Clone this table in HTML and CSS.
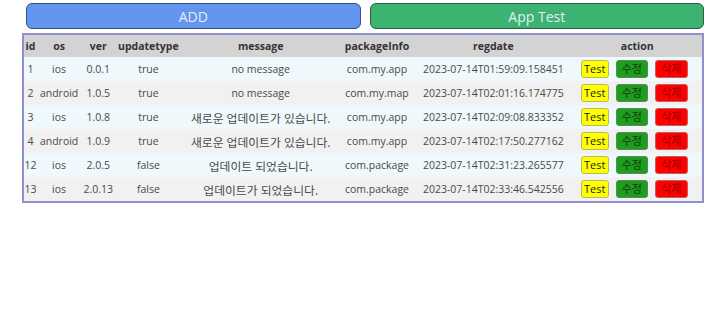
FILE: index.html
```html
<!DOCTYPE html>
<html lang="ko">
<head>
<meta charset="utf-8">
<link rel="stylesheet" href="styles.css">
</head>
<body>
<div class="wrap">
  <div class="topbar">
    <button class="big add">ADD</button>
    <button class="big apptest">App Test</button>
  </div>
  <table class="grid">
    <colgroup>
      <col class="c-id"><col class="c-os"><col class="c-ver"><col class="c-type"><col class="c-msg"><col class="c-pkg"><col class="c-date"><col class="c-act">
    </colgroup>
    <thead>
      <tr><th>id</th><th>os</th><th>ver</th><th>updatetype</th><th>message</th><th>packageInfo</th><th>regdate</th><th>action</th></tr>
    </thead>
    <tbody>
      <tr><td>1</td><td>ios</td><td>0.0.1</td><td>true</td><td>no message</td><td>com.my.app</td><td>2023-07-14T01:59:09.158451</td><td><div class="acts"><button class="sm test">Test</button><button class="sm edit">수정</button><button class="sm del">삭제</button></div></td></tr>
      <tr><td>2</td><td>android</td><td>1.0.5</td><td>true</td><td>no message</td><td>com.my.map</td><td>2023-07-14T02:01:16.174775</td><td><div class="acts"><button class="sm test">Test</button><button class="sm edit">수정</button><button class="sm del">삭제</button></div></td></tr>
      <tr><td>3</td><td>ios</td><td>1.0.8</td><td>true</td><td><span class="ko">새로운 업데이트가 있습니다.</span></td><td>com.my.app</td><td>2023-07-14T02:09:08.833352</td><td><div class="acts"><button class="sm test">Test</button><button class="sm edit">수정</button><button class="sm del">삭제</button></div></td></tr>
      <tr><td>4</td><td>android</td><td>1.0.9</td><td>true</td><td><span class="ko">새로운 업데이트가 있습니다.</span></td><td>com.my.app</td><td>2023-07-14T02:17:50.277162</td><td><div class="acts"><button class="sm test">Test</button><button class="sm edit">수정</button><button class="sm del">삭제</button></div></td></tr>
      <tr><td>12</td><td>ios</td><td>2.0.5</td><td>false</td><td><span class="ko">업데이트 되었습니다.</span></td><td>com.package</td><td>2023-07-14T02:31:23.265577</td><td><div class="acts"><button class="sm test">Test</button><button class="sm edit">수정</button><button class="sm del">삭제</button></div></td></tr>
      <tr><td>13</td><td>ios</td><td>2.0.13</td><td>false</td><td><span class="ko">업데이트가 되었습니다.</span></td><td>com.package</td><td>2023-07-14T02:33:46.542556</td><td><div class="acts"><button class="sm test">Test</button><button class="sm edit">수정</button><button class="sm del">삭제</button></div></td></tr>
    </tbody>
  </table>
</div>
</body>
</html>
```

FILE: styles.css
```css
html, body {
  margin: 0;
  padding: 0;
  background: #ffffff;
}
body {
  font-family: "Open Sans", "Noto Sans CJK KR", sans-serif;
  font-size: 10.5px;
  color: #4a4a4a;
}
.wrap {
  width: 682px;
  margin-left: 22px;
  padding-top: 3px;
}
.topbar {
  display: flex;
  gap: 9px;
  padding-left: 4px;
  margin-bottom: 4px;
}
.big {
  flex: 1;
  height: 26px;
  border-radius: 6px;
  font-family: "Open Sans", sans-serif;
  font-size: 14px;
  color: #e6edfa;
  padding: 0;
  cursor: pointer;
}
.add {
  background: #6495ed;
  border: 1px solid #3a4f80;
}
.apptest {
  background: #3cb371;
  border: 1px solid #2a5e45;
}
.grid {
  width: 682px;
  table-layout: fixed;
  border-collapse: collapse;
  border: 2px solid #8d8fcf;
}
.c-id { width: 14px; }
.c-os { width: 44px; }
.c-ver { width: 34px; }
.c-type { width: 66px; }
.c-msg { width: 158px; }
.c-pkg { width: 74px; }
.c-date { width: 158px; }
.c-act { width: 130px; }
.grid th, .grid td {
  padding: 0;
  text-align: center;
  white-space: nowrap;
}
.grid th {
  background: #d3d3d3;
  color: #333;
  font-weight: 700;
  height: 22px;
}
.grid td {
  height: 24px;
}
.ko {
  font-size: 11.8px;
}
.grid tbody tr:nth-child(odd) td {
  background: #eff9fb;
}
.grid tbody tr:nth-child(even) td {
  background: #f1f1f1;
}
.acts {
  display: flex;
  justify-content: center;
  gap: 7px;
  padding-right: 6px;
}
.sm {
  height: 18px;
  padding: 0;
  border-radius: 3px;
  font-family: "Open Sans", "Noto Sans CJK KR", sans-serif;
  font-size: 11px;
  line-height: 16px;
  cursor: pointer;
}
.test {
  background: #ffff00;
  border: 1px solid #b8b860;
  color: #222;
  width: 28px;
}
.edit {
  background: #1e9e1e;
  border: 1px solid #5a8a5a;
  color: #113311;
  width: 32px;
}
.del {
  background: #ff0000;
  border: 1px solid #c06060;
  color: #8a0000;
  width: 33px;
}
```
